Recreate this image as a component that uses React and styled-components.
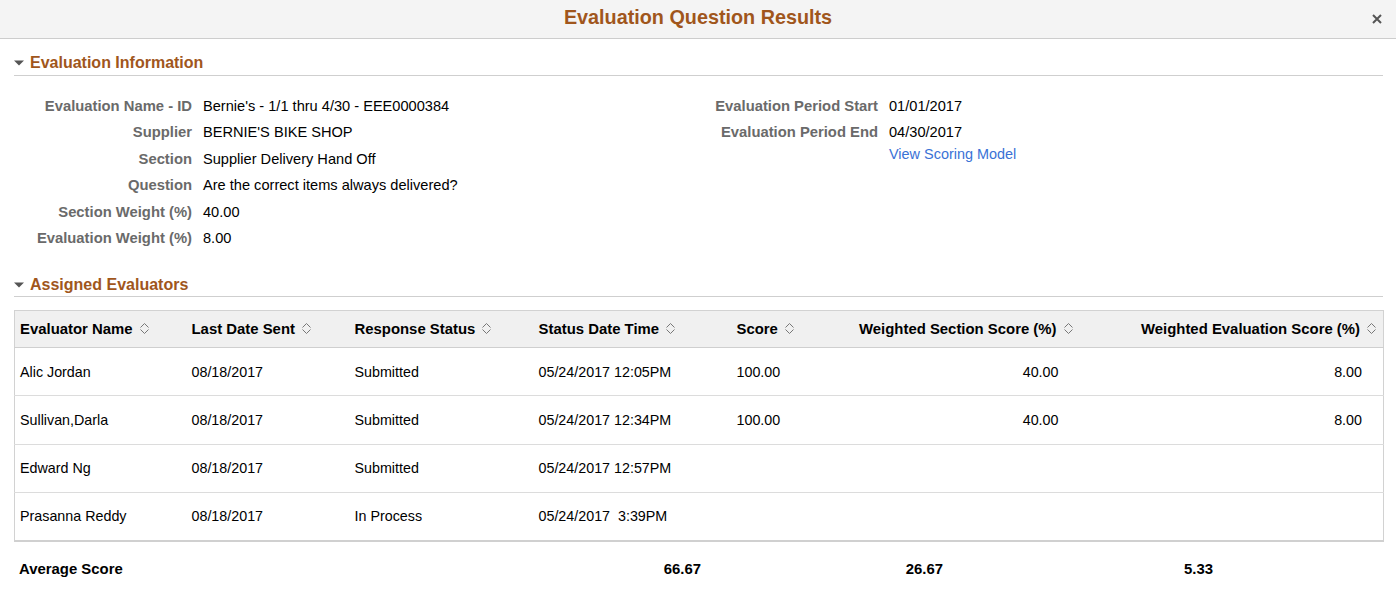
import React from "react";
import styled, { createGlobalStyle } from "styled-components";

const Global = createGlobalStyle`
  html, body { margin: 0; padding: 0; background: #fff; }
  body { font-family: "Liberation Sans", Arial, sans-serif; font-size: 14px; color: #000; }
  * { box-sizing: border-box; }
`;

const Page = styled.div`
  width: 1396px;
  min-height: 601px;
  background: #fff;
`;

const TitleBar = styled.header`
  position: relative;
  height: 39px;
  background: #f4f4f4;
  border-bottom: 1px solid #cdcdcd;
  display: flex;
  align-items: center;
  justify-content: center;
`;

const Title = styled.h1`
  margin: 0;
  font-size: 19.8px;
  font-weight: bold;
  color: #a0561c;
  line-height: 22px;
  padding-bottom: 4px;
`;

const CloseButton = styled.button`
  position: absolute;
  right: 13px;
  top: 13px;
  width: 12px;
  height: 12px;
  padding: 0;
  border: 0;
  background: transparent;
  display: flex;
  align-items: center;
  justify-content: center;
  cursor: pointer;
`;

const Body = styled.main`
  padding: 0 13px 0 14px;
`;

const SectionHeader = styled.div`
  margin-top: ${(p) => p.$top}px;
  height: 25px;
  border-bottom: 1px solid #cfcfcf;
  display: flex;
  align-items: center;
  gap: 6px;
  padding-top: ${(p) => p.$pt}px;
`;

const SectionTitle = styled.h2`
  margin: 0;
  font-size: 16px;
  font-weight: bold;
  color: #a0561c;
  line-height: 20px;
`;

const Fields = styled.div`
  display: grid;
  grid-template-columns: 676px 1fr;
  padding-top: 17px;
`;

const FieldColumn = styled.div`
  display: flex;
  flex-direction: column;
`;

const FieldRow = styled.div`
  display: grid;
  grid-template-columns: ${(p) => p.$labelWidth}px 1fr;
  column-gap: 11px;
  padding: 4px 0 4.4px;
  line-height: 18px;
`;

const Label = styled.div`
  text-align: right;
  font-weight: bold;
  font-size: 14.8px;
  color: #6a6a6a;
  white-space: nowrap;
`;

const Value = styled.div`
  color: #000;
  font-size: 14.6px;
  white-space: nowrap;
`;

const Link = styled.a`
  display: block;
  margin-top: 4px;
  font-size: 14.45px;
  color: #3a72d6;
  text-decoration: none;
  cursor: pointer;
`;

const TableWrap = styled.div`
  margin-top: 13px;
`;

const Table = styled.table`
  width: 1369px;
  border-collapse: collapse;
  table-layout: fixed;
  border: 1px solid #d2d2d2;
  border-bottom: 2px solid #d0d0d0;
`;

const Th = styled.th`
  height: 37px;
  padding: 0 6px 0 5px;
  background: #f0f0f0;
  border-bottom: 1px solid #cfcfcf;
  font-weight: bold;
  font-size: 14.9px;
  text-align: ${(p) => (p.$right ? "right" : "left")};
  white-space: nowrap;
  color: #000;
`;

const HeadInner = styled.span`
  display: inline-flex;
  align-items: center;
  gap: 6px;
`;

const Td = styled.td`
  height: 48.3px;
  padding: 0 ${(p) => (p.$right ? 21 : 6)}px 0 5px;
  border-bottom: 1px solid #dcdcdc;
  text-align: ${(p) => (p.$right ? "right" : "left")};
  font-size: 14.3px;
  white-space: pre;
  color: #000;
`;

const AverageRow = styled.div`
  margin-top: 12px;
  height: 30px;
  display: grid;
  grid-template-columns: 600px 87px 242px 270px;
  align-items: center;
  font-weight: bold;
  font-size: 14.9px;
`;

const AvgCell = styled.div`
  text-align: ${(p) => (p.$right ? "right" : "left")};
  padding-left: ${(p) => (p.$right ? 0 : 5)}px;
`;

const Caret = () => (
  <svg width="10" height="6" viewBox="0 0 10 6" aria-hidden="true">
    <path d="M0 0.5 L10 0.5 L5 5.5 Z" fill="#555" />
  </svg>
);

const SortIcon = () => (
  <svg width="11" height="13" viewBox="0 0 11 13" aria-hidden="true">
    <path d="M1.5 5.5 L5.5 1.5 L9.5 5.5" fill="none" stroke="#777" strokeWidth="1" />
    <path d="M1.5 7.5 L5.5 11.5 L9.5 7.5" fill="none" stroke="#777" strokeWidth="1" />
  </svg>
);

const columns = [
  { key: "name", label: "Evaluator Name", width: 172 },
  { key: "sent", label: "Last Date Sent", width: 163 },
  { key: "status", label: "Response Status", width: 184 },
  { key: "date", label: "Status Date Time", width: 198 },
  { key: "score", label: "Score", width: 100 },
  { key: "wss", label: "Weighted Section Score (%)", width: 248, right: true },
  { key: "wes", label: "Weighted Evaluation Score (%)", width: 304, right: true },
];

const rows = [
  { name: "Alic Jordan", sent: "08/18/2017", status: "Submitted", date: "05/24/2017 12:05PM", score: "100.00", wss: "40.00", wes: "8.00" },
  { name: "Sullivan,Darla", sent: "08/18/2017", status: "Submitted", date: "05/24/2017 12:34PM", score: "100.00", wss: "40.00", wes: "8.00" },
  { name: "Edward Ng", sent: "08/18/2017", status: "Submitted", date: "05/24/2017 12:57PM", score: "", wss: "", wes: "" },
  { name: "Prasanna Reddy", sent: "08/18/2017", status: "In Process", date: "05/24/2017  3:39PM", score: "", wss: "", wes: "" },
];

const leftFields = [
  ["Evaluation Name - ID", "Bernie's - 1/1 thru 4/30 - EEE0000384"],
  ["Supplier", "BERNIE'S BIKE SHOP"],
  ["Section", "Supplier Delivery Hand Off"],
  ["Question", "Are the correct items always delivered?"],
  ["Section Weight (%)", "40.00"],
  ["Evaluation Weight (%)", "8.00"],
];

export default function App() {
  return (
    <Page>
      <Global />
      <TitleBar>
        <Title>Evaluation Question Results</Title>
        <CloseButton aria-label="Close">
          <svg width="10" height="10" viewBox="0 0 10 10" aria-hidden="true">
            <path d="M1 1 L9 9 M9 1 L1 9" stroke="#555" strokeWidth="2" />
          </svg>
        </CloseButton>
      </TitleBar>
      <Body>
        <SectionHeader $top={12} $pt={0}>
          <Caret />
          <SectionTitle>Evaluation Information</SectionTitle>
        </SectionHeader>
        <Fields>
          <FieldColumn>
            {leftFields.map(([l, v]) => (
              <FieldRow key={l} $labelWidth={178}>
                <Label>{l}</Label>
                <Value>{v}</Value>
              </FieldRow>
            ))}
          </FieldColumn>
          <FieldColumn>
            <FieldRow $labelWidth={188}>
              <Label>Evaluation Period Start</Label>
              <Value>01/01/2017</Value>
            </FieldRow>
            <FieldRow $labelWidth={188}>
              <Label>Evaluation Period End</Label>
              <Value>
                04/30/2017
                <Link>View Scoring Model</Link>
              </Value>
            </FieldRow>
          </FieldColumn>
        </Fields>
        <SectionHeader $top={20.6} $pt={2}>
          <Caret />
          <SectionTitle>Assigned Evaluators</SectionTitle>
        </SectionHeader>
        <TableWrap>
          <Table>
            <colgroup>
              {columns.map((c) => (
                <col key={c.key} style={{ width: c.width }} />
              ))}
            </colgroup>
            <thead>
              <tr>
                {columns.map((c) => (
                  <Th key={c.key} $right={c.right}>
                    <HeadInner>
                      {c.label}
                      <SortIcon />
                    </HeadInner>
                  </Th>
                ))}
              </tr>
            </thead>
            <tbody>
              {rows.map((r) => (
                <tr key={r.name}>
                  {columns.map((c) => (
                    <Td key={c.key} $right={c.right}>
                      {r[c.key]}
                    </Td>
                  ))}
                </tr>
              ))}
            </tbody>
          </Table>
        </TableWrap>
        <AverageRow>
          <AvgCell>Average Score</AvgCell>
          <AvgCell $right>66.67</AvgCell>
          <AvgCell $right>26.67</AvgCell>
          <AvgCell $right>5.33</AvgCell>
        </AverageRow>
      </Body>
    </Page>
  );
}
